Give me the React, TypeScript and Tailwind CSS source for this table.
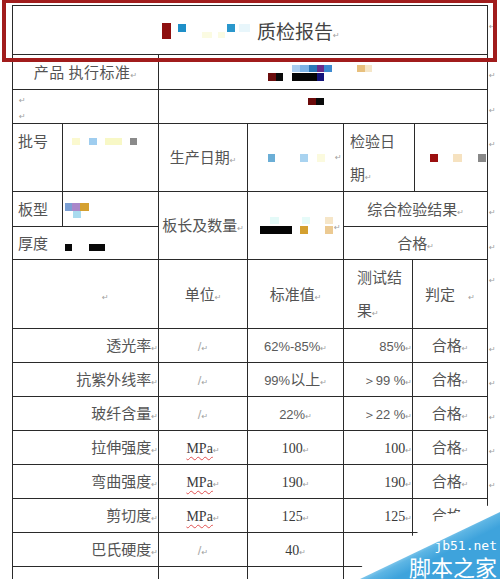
const B = 'border border-[#2a2a2a] p-0';

function Pm({ className = '' }: { className?: string }) {
  return (
    <span className={`inline-block align-baseline font-['DejaVu_Sans',sans-serif] text-[8px] leading-none text-[#a0a0a0] ${className}`}>
      ↵
    </span>
  );
}

function EndMark() {
  return (
    <td className="p-0 pl-[1px] pt-[6px] align-top">
      <Pm />
    </td>
  );
}

interface DataRow {
  name: string;
  unit: 'slash' | 'mpa';
  std: string;
  serif?: boolean;
  result: string;
  verdict: string;
}

const rows: DataRow[] = [
  { name: '透光率', unit: 'slash', std: '62%-85%', result: '85%', verdict: '合格' },
  { name: '抗紫外线率', unit: 'slash', std: '99%', result: '＞99 %', verdict: '合格' },
  { name: '玻纤含量', unit: 'slash', std: '22%', result: '＞22 %', verdict: '合格' },
  { name: '拉伸强度', unit: 'mpa', std: '100', serif: true, result: '100', verdict: '合格' },
  { name: '弯曲强度', unit: 'mpa', std: '190', serif: true, result: '190', verdict: '合格' },
  { name: '剪切度', unit: 'mpa', std: '125', serif: true, result: '125', verdict: '合格' },
  { name: '巴氏硬度', unit: 'slash', std: '40', serif: true, result: '', verdict: '' },
];

const numSerif = "font-['Liberation_Serif',serif] text-[14px] text-[#3a3a3a]";
const numSans = "font-['Liberation_Sans',sans-serif] text-[13px] text-[#5a5a5a]";

function Unit({ kind }: { kind: DataRow['unit'] }) {
  if (kind === 'mpa') {
    return (
      <span className="font-['Liberation_Serif',serif] text-[14px] text-[#3a3a3a] underline decoration-wavy decoration-[#e05050] decoration-1 underline-offset-[3px]">
        MPa
      </span>
    );
  }
  return <span className="font-['Liberation_Sans',sans-serif] text-[13px] text-[#ababab]">/</span>;
}

export default function App() {
  return (
    <div className="relative h-[579px] w-[500px] overflow-hidden bg-white pl-[12px] pt-[5px] font-['Noto_Sans_CJK_SC',sans-serif] text-[15px] text-[#545454]">
      <table className="w-[488px] table-fixed border-collapse">
        <colgroup>
          <col className="w-[50px]" />
          <col className="w-[96px]" />
          <col className="w-[89px]" />
          <col className="w-[96px]" />
          <col className="w-[69px]" />
          <col className="w-[2px]" />
          <col className="w-[73px]" />
          <col className="w-[13px]" />
        </colgroup>
        <tbody>
          <tr className="h-[49px]">
            <td colSpan={7} className={`${B} align-top`}>
              <div className="flex h-[47px] items-start pl-[149px]">
                <span className="mt-[17px] h-[16px] w-[9px] bg-[#8e1010]" />
                <span className="ml-[7px] mt-[18px] h-[8px] w-[8px] bg-[#1e8fc8]" />
                <span className="ml-[16px] mt-[26px] h-[6px] w-[10px] bg-[#fbfbe2]" />
                <span className="ml-[6px] mt-[26px] h-[6px] w-[7px] bg-[#fbfbe2]" />
                <span className="ml-[2px] mt-[18px] h-[8px] w-[8px] bg-[#2a97cc]" />
                <span className="ml-[4px] mt-[18px] h-[8px] w-[11px] bg-[#e8f6fb]" />
                <span className="ml-[7px] mt-[15px] text-[19px] leading-[19px] text-[#444]">质检报告</span>
                <Pm className="mt-[26px]" />
              </div>
            </td>
            <EndMark />
          </tr>

          <tr className="h-[35px]">
            <td colSpan={2} className={`${B} text-center align-middle`}>
              <span className="tracking-[0.5px]">产品 执行标准</span>
              <Pm />
            </td>
            <td colSpan={5} className={`${B} align-top`}>
              <div className="flex flex-col gap-[1px] pt-[10px]">
                <div className="ml-[133px] flex h-[7px]">
                  <span className="w-[8px] bg-[#a8cdf0]" />
                  <span className="w-[9px] bg-[#7db4e6]" />
                  <span className="w-[8px] bg-[#2a78b8]" />
                  <span className="w-[7px] bg-[#6a2c8a]" />
                  <span className="w-[8px] bg-[#3c8ad0]" />
                  <span className="ml-[25px] w-[8px] bg-[#e8c07d]" />
                  <span className="w-[7px] bg-[#f5e6c8]" />
                </div>
                <div className="ml-[109px] flex h-[8px]">
                  <span className="w-[8px] bg-[#6b0d0d]" />
                  <span className="w-[7px] bg-[#0a0a0a]" />
                  <span className="ml-[9px] w-[25px] bg-[#050505]" />
                  <span className="w-[7px] bg-[#14147a]" />
                </div>
              </div>
            </td>
            <EndMark />
          </tr>

          <tr className="h-[34px]">
            <td colSpan={2} className={`${B} align-top`}>
              <div className="flex flex-col gap-[8px] pl-[6px] pt-[7px]">
                <Pm />
                <Pm />
              </div>
            </td>
            <td colSpan={5} className={`${B} align-top`}>
              <div className="ml-[149px] mt-[8px] flex h-[7px]">
                <span className="w-[8px] bg-[#6b0a0a]" />
                <span className="w-[8px] bg-[#0a0a0a]" />
              </div>
            </td>
            <EndMark />
          </tr>

          <tr className="h-[68px]">
            <td className={`${B} pl-[5px] align-top leading-[33px]`}>批号</td>
            <td className={`${B} align-top`}>
              <div className="ml-[9px] mt-[14px] flex h-[7px]">
                <span className="w-[8px] bg-[#fbf9cf]" />
                <span className="ml-[9px] w-[8px] bg-[#9fcdef]" />
                <span className="ml-[8px] w-[17px] bg-[#f8f8c6]" />
                <span className="ml-[8px] w-[7px] bg-[#8a8a8a]" />
              </div>
            </td>
            <td className={`${B} text-center align-middle`}>
              生产日期<Pm />
            </td>
            <td className={`${B} align-middle`}>
              <div className="ml-[20px] flex h-[8px] items-end">
                <span className="h-[8px] w-[7px] bg-[#6baed6]" />
                <span className="ml-[25px] h-[8px] w-[8px] bg-[#a9d3f0]" />
                <span className="ml-[9px] h-[8px] w-[8px] bg-[#fbfade]" />
                <Pm className="ml-[10px]" />
              </div>
            </td>
            <td colSpan={2} className={`${B} pl-[6px] align-top leading-[33px]`}>
              检验日
              <br />
              期<Pm />
            </td>
            <td className={`${B} align-middle`}>
              <div className="ml-[15px] flex h-[8px]">
                <span className="w-[8px] bg-[#9b0f0f]" />
                <span className="ml-[15px] w-[9px] bg-[#f6e2c0]" />
                <span className="ml-[16px] w-[8px] bg-[#888888]" />
              </div>
            </td>
            <EndMark />
          </tr>

          <tr className="h-[35px]">
            <td className={`${B} pl-[5px] align-middle`}>板型</td>
            <td className={`${B} align-top`}>
              <div className="ml-[2px] mt-[11px] flex h-[8px]">
                <span className="w-[7px] bg-[#7b9fd4]" />
                <span className="w-[8px] bg-[#a987c9]" />
                <span className="w-[9px] bg-[#d4a030]" />
              </div>
              <div className="ml-[10px] flex h-[7px]">
                <span className="w-[8px] bg-[#a9dbef]" />
              </div>
            </td>
            <td rowSpan={2} className={`${B} text-center align-middle`}>
              板长及数量<Pm />
            </td>
            <td rowSpan={2} className={`${B} align-middle`}>
              <div className="flex flex-col gap-[2px]">
                <div className="ml-[22px] flex h-[7px]">
                  <span className="w-[9px] bg-[#e4faf8]" />
                  <span className="ml-[23px] w-[8px] bg-[#e6fbf9]" />
                  <span className="ml-[15px] w-[8px] bg-[#f6e6c8]" />
                </div>
                <div className="ml-[12px] flex h-[8px]">
                  <span className="w-[32px] bg-[#050505]" />
                  <span className="ml-[8px] w-[8px] bg-[#d4a030]" />
                  <span className="ml-[17px] w-[8px] bg-[#ecca92]" />
                  <Pm className="-mt-[2px] ml-[1px]" />
                </div>
              </div>
            </td>
            <td colSpan={3} className={`${B} text-center align-middle`}>
              综合检验结果<Pm />
            </td>
            <EndMark />
          </tr>

          <tr className="h-[33px]">
            <td colSpan={2} className={`${B} align-middle`}>
              <div className="flex items-center pl-[5px]">
                <span>厚度</span>
                <span className="ml-[17px] h-[7px] w-[7px] translate-y-[4px] bg-[#080808]" />
                <span className="ml-[17px] h-[7px] w-[16px] translate-y-[4px] bg-[#080808]" />
              </div>
            </td>
            <td colSpan={3} className={`${B} text-center align-middle`}>
              合格<Pm />
            </td>
            <EndMark />
          </tr>

          <tr className="h-[69px]">
            <td colSpan={2} className={`${B} pl-[89px] align-middle`}>
              <Pm />
            </td>
            <td className={`${B} text-center align-middle`}>
              单位<Pm />
            </td>
            <td className={`${B} text-center align-middle`}>
              标准值<Pm />
            </td>
            <td className={`${B} pl-[13px] align-top leading-[33px]`}>
              测试结
              <br />
              果<Pm />
            </td>
            <td colSpan={2} className={`${B} text-center align-middle`}>
              判定 <Pm className="ml-[10px]" />
            </td>
            <EndMark />
          </tr>

          {rows.map((r) => (
            <tr key={r.name} className="h-[34px]">
              <td colSpan={2} className={`${B} text-right align-middle`}>
                {r.name}
                <Pm />
              </td>
              <td className={`${B} text-center align-middle`}>
                <Unit kind={r.unit} />
                <Pm />
              </td>
              <td className={`${B} text-center align-middle`}>
                <span className={r.serif ? numSerif : numSans}>{r.std}</span>
                {r.name === '抗紫外线率' ? <span>以上</span> : null}
                <Pm />
              </td>
              <td className={`${B} text-right align-middle`}>
                {r.result ? (
                  <>
                    <span className={r.serif ? numSerif : numSans}>{r.result}</span>
                    <Pm />
                  </>
                ) : null}
              </td>
              <td colSpan={2} className={`${B} text-center align-middle`}>
                {r.verdict ? (
                  <>
                    {r.verdict}
                    <Pm />
                  </>
                ) : null}
              </td>
              <EndMark />
            </tr>
          ))}

          <tr className="h-[40px]">
            <td colSpan={2} className={B} />
            <td className={B} />
            <td className={B} />
            <td className={B} />
            <td colSpan={2} className={B} />
            <td className="p-0" />
          </tr>
        </tbody>
      </table>

      {/* red annotation frame over the title row */}
      <div className="pointer-events-none absolute left-[2px] top-[-1px] h-[63px] w-[495px] border-[4px] border-[#a11c1c]" />

      {/* site watermark, bottom right */}
      <div className="pointer-events-none absolute left-[330px] top-[479px] h-[100px] w-[170px]">
        <svg width="170" height="100" viewBox="0 0 170 100" className="block">
          <defs>
            <linearGradient id="wm" gradientUnits="userSpaceOnUse" x1="95" y1="62" x2="104" y2="80">
              <stop offset="0" stopColor="#a9dcf4" />
              <stop offset="0.45" stopColor="#5db5e4" />
              <stop offset="1" stopColor="#3ea3dc" />
            </linearGradient>
          </defs>
          <polygon points="15,100 31,89 53,57 82,57 115,36 157,27 170,21 170,100" fill="#ffffff" />
          <polygon points="30,100 170,33 170,100" fill="url(#wm)" />
        </svg>
        <div className="absolute right-[3px] top-[60px] font-['DejaVu_Sans_Mono',monospace] text-[13px] leading-[13px] text-white">
          jb51.net
        </div>
        <div className="absolute bottom-[2px] right-[3px] font-['Noto_Sans_CJK_SC',sans-serif] text-[22px] leading-[22px] text-white">
          脚本之家
        </div>
      </div>
    </div>
  );
}
